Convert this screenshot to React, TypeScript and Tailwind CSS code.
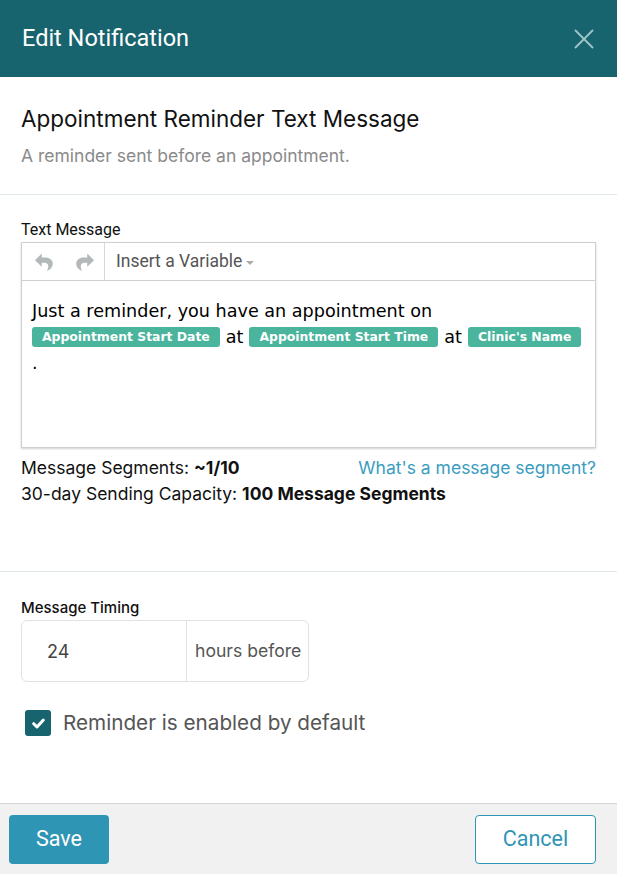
import React from 'react';

function UndoIcon({ flip = false }: { flip?: boolean }) {
  return (
    <svg
      width="20"
      height="20"
      viewBox="0 0 16 16"
      className={flip ? '-scale-x-100' : ''}
      fill="#b3b8bb"
    >
      <path d="M6.2 1.2 L0.8 6.5 L6.2 11.8 V8.6 H8.4 C10.3 8.6 11.4 9.6 11.4 11.5 C11.4 13 10.9 14.2 9.9 15.2 C13.1 14.1 15 12.2 15 9.5 C15 6.3 12.6 4.3 8.8 4.3 H6.2 Z" />
    </svg>
  );
}

function Chip({ children }: { children: React.ReactNode }) {
  return (
    <span className="inline-block flex-none whitespace-nowrap rounded-[3px] bg-[#4ab49c] px-[10px] py-[1px] font-['DejaVu_Sans',sans-serif] text-[12.4px] font-bold leading-[18px] text-white">
      {children}
    </span>
  );
}

export default function App() {
  return (
    <div className="flex min-h-[874px] w-[617px] flex-col bg-white font-['Inter',sans-serif]">
      {/* header */}
      <div className="flex h-[77px] items-center justify-between bg-[#17636e] pl-[22px] pr-[22px]">
        <h1 className="font-['Roboto',sans-serif] text-[23.5px] text-white">Edit Notification</h1>
        <svg width="22" height="22" viewBox="0 0 22 22" stroke="#9cc3c6" strokeWidth="2">
          <line x1="2" y1="2" x2="20" y2="20" />
          <line x1="20" y1="2" x2="2" y2="20" />
        </svg>
      </div>

      {/* title */}
      <div className="border-b border-[#dfe7e7] px-[21px] pb-[27px] pt-[28px]">
        <h2 className="text-[22.5px] leading-[28px] text-[#111]">Appointment Reminder Text Message</h2>
        <p className="mt-[12px] text-[17.5px] leading-[22px] text-[#8a8a8a]">
          A reminder sent before an appointment.
        </p>
      </div>

      {/* message */}
      <div className="border-b border-[#dfe7e7] px-[21px] pb-[64px] pt-[26px]">
        <label className="block font-['Roboto',sans-serif] text-[16px] leading-[18px] text-[#111]">
          Text Message
        </label>
        <div className="mt-[3px] border border-[#cfcfcf] shadow-[0_1px_2px_rgba(0,0,0,0.18)]">
          <div className="flex h-[38px] items-center border-b border-[#cfcfcf]">
            <div className="flex h-full w-[83px] items-center gap-[21px] border-r border-[#d9d9d9] pl-[12px]">
              <UndoIcon />
              <UndoIcon flip />
            </div>
            <div className="flex items-center pl-[11px] font-['Roboto',sans-serif] text-[17.5px] text-[#555]">
              Insert a Variable
              <span className="ml-[4px] mt-[3px] h-0 w-0 border-x-[4px] border-t-[4px] border-x-transparent border-t-[#aaa]" />
            </div>
          </div>
          <div className="h-[166px] px-[10px] pt-[17px] font-['DejaVu_Sans',sans-serif] text-[17.6px] leading-[26px] text-black">
            <div>Just a reminder, you have an appointment on</div>
            <div className="flex items-center gap-[6px]">
              <Chip>Appointment Start Date</Chip>
              <span>at</span>
              <Chip>Appointment Start Time</Chip>
              <span>at</span>
              <Chip>Clinic's Name</Chip>
            </div>
            <div>.</div>
          </div>
        </div>
        <div className="mt-[6px] flex items-center justify-between text-[17.5px] leading-[27px] text-[#111]">
          <span>
            Message Segments: <b className="font-bold">~1/10</b>
          </span>
          <span className="text-[#3a9dc0]">What's a message segment?</span>
        </div>
        <div className="text-[17.5px] leading-[26px] text-[#111]">
          30-day Sending Capacity: <b className="font-bold">100 Message Segments</b>
        </div>
      </div>

      {/* timing */}
      <div className="flex-1 px-[21px] pt-[27px]">
        <label className="block text-[15px] font-medium leading-[18px] text-[#111]">Message Timing</label>
        <div className="mt-[3px] flex h-[62px] w-[288px] rounded-[6px] border border-[#e2e2e2]">
          <div className="flex w-[165px] items-center border-r border-[#e2e2e2] pl-[25px] text-[18px] text-[#444]">
            24
          </div>
          <div className="flex items-center pl-[8px] text-[17.6px] text-[#555]">hours before</div>
        </div>
        <div className="mt-[27px] flex items-center gap-[12px] pl-[4px]">
          <span className="flex h-[26px] w-[26px] items-center justify-center rounded-[3px] bg-[#17636e]">
            <svg width="15" height="15" viewBox="0 0 14 14" fill="none" stroke="white" strokeWidth="2.8" strokeLinecap="round" strokeLinejoin="round">
              <path d="M2.5 7.2 L5.6 10.2 L11.5 3.8" />
            </svg>
          </span>
          <span className="text-[20.7px] leading-[28px] text-[#555]">Reminder is enabled by default</span>
        </div>
      </div>

      {/* footer */}
      <div className="flex h-[71px] items-center justify-between border-t border-[#d4d4d4] bg-[#f1f1f1] pl-[9px] pr-[21px]">
        <button className="h-[49px] w-[100px] rounded-[4px] bg-[#2f95b5] font-['Roboto',sans-serif] text-[21.5px] text-white">
          Save
        </button>
        <button className="h-[49px] w-[121px] rounded-[4px] border border-[#2f95b5] bg-white font-['Roboto',sans-serif] text-[21.5px] text-[#2f95b5]">
          Cancel
        </button>
      </div>
    </div>
  );
}
